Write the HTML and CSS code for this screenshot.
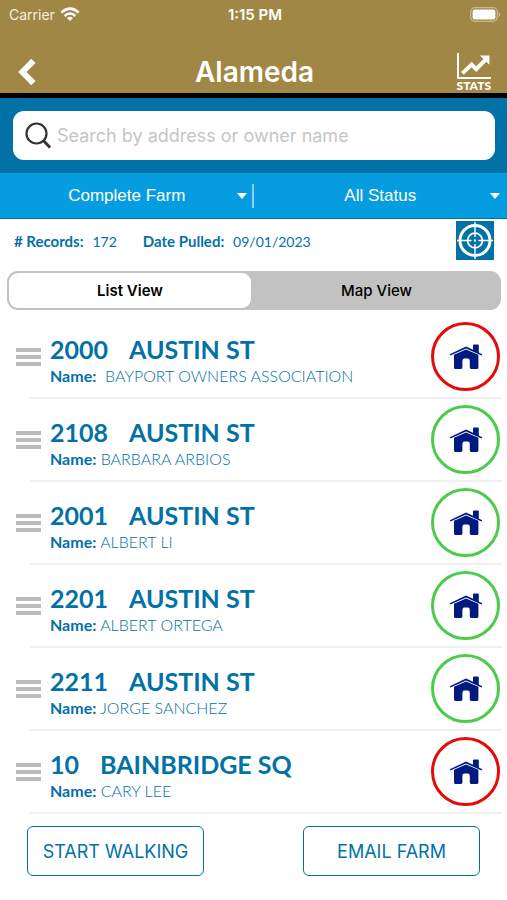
FILE: index.html
```html
<!DOCTYPE html>
<html lang="en">
<head>
  <meta charset="UTF-8" />
  <meta name="viewport" content="width=device-width, initial-scale=1.0" />
  <title>Alameda</title>
  <link rel="stylesheet" href="styles.css">
</head>
<body>

  <!-- Shared icons -->
  <svg class="icon-defs" aria-hidden="true">
    <symbol id="house" viewBox="0 0 34 26">
      <path d="M17 2.6 L0.8 10.2 L1.4 11.4 L17 4.6 L32.6 11.4 L33.2 10.2 L29.8 8.6 V1.4 Q29.8 0.4 28.8 0.4 H25 Q24 0.4 24 1.4 V5.8 Z" />
      <path d="M17 5.4 L5 10.8 V23.4 Q5 25 6.6 25 H12 Q13.4 25 13.4 23.6 V17 Q13.4 14.6 15.4 14.6 H18.8 Q20.8 14.6 20.8 17 V23.6 Q20.8 25 22.2 25 H27.8 Q29.4 25 29.4 23.4 V10.8 Z" />
    </symbol>
  </svg>

  <header class="top-bar">
    <div class="status-bar">
      <span class="carrier">Carrier
        <svg width="20" height="15" viewBox="0 0 20 15" fill="none" stroke="#fff" stroke-width="2.6" aria-hidden="true">
          <path d="M1.3 5.6 Q10 -2.4 18.7 5.6" />
          <path d="M4.6 9 Q10 4 15.4 9" />
          <path d="M10 14 L7 10.9 Q10 8.4 13 10.9 Z" fill="#fff" stroke="none" />
        </svg>
      </span>
      <span class="time">1:15 PM</span>
      <svg class="battery" width="31" height="15" viewBox="0 0 31 15" aria-hidden="true">
        <rect x="0.7" y="0.7" width="26.6" height="13.6" rx="4" fill="none" stroke="#c9bb92" stroke-width="1.2" />
        <rect x="2.6" y="2.6" width="22.8" height="9.8" rx="2.2" fill="#fff" />
        <path d="M28.6 5 Q30.4 6 30.4 7.5 Q30.4 9 28.6 10 Z" fill="#c9bb92" />
      </svg>
    </div>
    <div class="title-bar">
      <button class="back-button" aria-label="Back">
        <svg width="18" height="28" viewBox="0 0 18 28" fill="none" stroke="#fff" stroke-width="6" aria-hidden="true">
          <path d="M15.4 2.8 L4.4 14 L15.4 25.2" />
        </svg>
      </button>
      <h1>Alameda</h1>
      <button class="stats-button">
        <svg width="34" height="26" viewBox="0 0 34 26" aria-hidden="true">
          <path d="M1 0 V25 H34" fill="none" stroke="#fff" stroke-width="2" />
          <path d="M5.4 20.4 L14.6 11.6 L19.2 16.2 L28.4 6.8" fill="none" stroke="#fff" stroke-width="4" />
          <path d="M23 2.4 H32.4 V11.8 Z" fill="#fff" />
        </svg>
        <span>STATS</span>
      </button>
    </div>
  </header>

  <form class="search-bar">
    <label class="search-box">
      <svg width="26" height="27" viewBox="0 0 26 27" fill="none" stroke="#333" aria-hidden="true">
        <circle cx="11.5" cy="11.5" r="10" stroke-width="2.2" />
        <path d="M18.6 18.8 L25 25.6" stroke-width="2.8" />
      </svg>
      <input type="search" placeholder="Search by address or owner name" aria-label="Search by address or owner name">
    </label>
  </form>

  <div class="filter-bar">
    <div class="filter">
      <select aria-label="Farm">
        <option>Complete Farm</option>
      </select>
    </div>
    <div class="filter">
      <select aria-label="Status">
        <option>All Status</option>
      </select>
    </div>
  </div>

  <main>
    <div class="summary">
      <p><b># Records:</b> <span>172</span></p>
      <p><b>Date Pulled:</b> <span>09/01/2023</span></p>
      <button class="target-button" aria-label="Locate">
        <svg width="38" height="39" viewBox="0 0 38 39" fill="none" stroke="#fff" aria-hidden="true">
          <circle cx="19" cy="19.5" r="15" stroke-width="3" />
          <circle cx="19" cy="19.5" r="7.4" stroke-width="1.8" />
          <path d="M19 1 V16 M19 23 V38 M1 19.5 H15.5 M22.5 19.5 H37" stroke-width="1.4" />
          <circle cx="19" cy="19.5" r="1.2" fill="#fff" stroke="none" />
        </svg>
      </button>
    </div>

    <div class="view-switch">
      <button class="active" aria-pressed="true">List View</button>
      <button aria-pressed="false">Map View</button>
    </div>

    <ul class="records">
      <li class="record">
        <button class="handle" aria-label="Reorder"><i></i><i></i><i></i></button>
        <div class="details">
          <h2><span>2000</span><span>AUSTIN ST</span></h2>
          <p><b>Name:</b>&nbsp; BAYPORT OWNERS ASSOCIATION</p>
        </div>
        <button class="home-button red" aria-label="Open property"><svg width="34" height="26"><use href="#house" /></svg></button>
      </li>
      <li class="record">
        <button class="handle" aria-label="Reorder"><i></i><i></i><i></i></button>
        <div class="details">
          <h2><span>2108</span><span>AUSTIN ST</span></h2>
          <p><b>Name:</b> BARBARA ARBIOS</p>
        </div>
        <button class="home-button green" aria-label="Open property"><svg width="34" height="26"><use href="#house" /></svg></button>
      </li>
      <li class="record">
        <button class="handle" aria-label="Reorder"><i></i><i></i><i></i></button>
        <div class="details">
          <h2><span>2001</span><span>AUSTIN ST</span></h2>
          <p><b>Name:</b> ALBERT LI</p>
        </div>
        <button class="home-button green" aria-label="Open property"><svg width="34" height="26"><use href="#house" /></svg></button>
      </li>
      <li class="record">
        <button class="handle" aria-label="Reorder"><i></i><i></i><i></i></button>
        <div class="details">
          <h2><span>2201</span><span>AUSTIN ST</span></h2>
          <p><b>Name:</b> ALBERT ORTEGA</p>
        </div>
        <button class="home-button green" aria-label="Open property"><svg width="34" height="26"><use href="#house" /></svg></button>
      </li>
      <li class="record">
        <button class="handle" aria-label="Reorder"><i></i><i></i><i></i></button>
        <div class="details">
          <h2><span>2211</span><span>AUSTIN ST</span></h2>
          <p><b>Name:</b> JORGE SANCHEZ</p>
        </div>
        <button class="home-button green" aria-label="Open property"><svg width="34" height="26"><use href="#house" /></svg></button>
      </li>
      <li class="record">
        <button class="handle" aria-label="Reorder"><i></i><i></i><i></i></button>
        <div class="details">
          <h2><span>10</span><span>BAINBRIDGE SQ</span></h2>
          <p><b>Name:</b> CARY LEE</p>
        </div>
        <button class="home-button red" aria-label="Open property"><svg width="34" height="26"><use href="#house" /></svg></button>
      </li>
    </ul>
  </main>

  <footer class="actions">
    <button>START WALKING</button>
    <button>EMAIL FARM</button>
  </footer>

</body>
</html>
```
FILE: styles.css
```css
/* Reset */
* {
  box-sizing: border-box;
  margin: 0;
  padding: 0;
}

body {
  font-family: Inter, "Liberation Sans", sans-serif;
  color: #0271a6;
  background: #fff;
  min-height: 100vh;
}

button {
  font-family: inherit;
  color: inherit;
  background: none;
  border: none;
  cursor: pointer;
}

svg {
  display: block;
}

.icon-defs {
  position: absolute;
  width: 0;
  height: 0;
}

/* Top bar */
.top-bar {
  background: #a08745;
  border-bottom: 5px solid #000;
  color: #fff;
}

.status-bar {
  display: grid;
  grid-template-columns: 1fr auto 1fr;
  align-items: center;
  height: 28px;
  padding: 0 6px 0 9px;
  font-size: 15px;
}

.carrier {
  display: flex;
  align-items: center;
  gap: 5px;
  font-size: 14px;
  color: #f4efe0;
}

.time {
  font-weight: 600;
}

.battery {
  justify-self: end;
}

.title-bar {
  display: grid;
  grid-template-columns: 1fr auto 1fr;
  align-items: end;
  height: 65px;
  padding: 0 16px 2px 18px;
}

.title-bar h1 {
  font-size: 28px;
  line-height: 38px;
  font-weight: 600;
}

.back-button {
  justify-self: start;
  padding-bottom: 5px;
}

.stats-button {
  justify-self: end;
  display: flex;
  flex-direction: column;
  align-items: center;
  gap: 2px;
  font-family: Lato, sans-serif;
  font-size: 12px;
  line-height: 10px;
  font-weight: 900;
}

/* Search */
.search-bar {
  background: #0271a6;
  padding: 13px 12px 12px 13px;
}

.search-box {
  display: flex;
  align-items: center;
  gap: 6px;
  height: 49px;
  padding: 0 12px;
  background: #fff;
  border-radius: 11px;
}

.search-box input {
  flex: 1;
  min-width: 0;
  font-family: inherit;
  font-size: 18px;
  color: #333;
  background: none;
  border: none;
  outline: none;
}

.search-box input::placeholder {
  color: #c5c5c7;
}

/* Filters */
.filter-bar {
  display: grid;
  grid-template-columns: 1fr 1fr;
  height: 47px;
  background: #069de0;
  border-top: 1px solid #0271a6;
  border-bottom: 1px solid #0271a6;
}

.filter {
  display: flex;
  align-items: center;
  position: relative;
}

.filter:first-child::before {
  content: "";
  position: absolute;
  right: 0;
  width: 2px;
  height: 24px;
  background: #8fd0f0;
}

/* Drop-down arrow */
.filter::after {
  content: "";
  position: absolute;
  right: 7px;
  border: 5px solid transparent;
  border-top: 6px solid #fff;
  border-bottom: 0;
  pointer-events: none;
}

.filter select {
  appearance: none;
  width: 100%;
  height: 100%;
  font-family: "Liberation Sans", Arial, sans-serif;
  font-size: 17px;
  text-align: center;
  text-align-last: center;
  color: #fff;
  background: none;
  border: none;
}

/* Summary */
.summary {
  display: flex;
  align-items: center;
  gap: 26px;
  height: 43px;
  padding: 0 13px 0 14px;
  font-family: Lato, sans-serif;
  font-size: 15px;
}

.summary span {
  margin-left: 5px;
  font-size: 14px;
}

.target-button {
  margin-left: auto;
  background: #0271a6;
}

/* List / map switch */
.view-switch {
  display: grid;
  grid-template-columns: 1fr 1fr;
  height: 39px;
  margin: 9px 6px 6px 7px;
  padding: 2px;
  background: #c2c2c2;
  border-radius: 11px;
}

.view-switch button {
  font-size: 15px;
  font-weight: 500;
  color: #000;
  border-radius: 9px;
}

.view-switch .active {
  margin-right: 3px;
  font-weight: 600;
  background: #fff;
}

/* Records */
.records {
  list-style: none;
}

.record {
  display: flex;
  align-items: center;
  height: 83px;
  padding: 0 7px 2px 16px;
  background: linear-gradient(#f0f0f0, #f0f0f0) 30px 100% / calc(100% - 35px) 2px no-repeat;
}

.handle {
  display: flex;
  flex-direction: column;
  gap: 3px;
  width: 25px;
}

.handle i {
  height: 4px;
  background: #bcbcbc;
}

.details {
  flex: 1;
  margin-left: 9px;
  padding-top: 8px;
  font-family: Lato, sans-serif;
}

.details h2 {
  display: flex;
  gap: 21px;
  font-size: 25px;
  line-height: 30px;
  font-weight: 700;
}

.details p {
  font-size: 16px;
  line-height: 24px;
  font-weight: 300;
}

.details b {
  font-weight: 700;
}

.home-button {
  display: flex;
  align-items: center;
  justify-content: center;
  width: 69px;
  height: 69px;
  border: 3px solid;
  border-radius: 50%;
}

.home-button svg {
  fill: #001a80;
}

.red {
  border-color: #e60a0a;
}

.green {
  border-color: #4ccb4c;
}

/* Bottom actions */
.actions {
  display: flex;
  justify-content: space-between;
  padding: 12px 27px 24px;
}

.actions button {
  width: 177px;
  height: 50px;
  font-size: 18px;
  border: 1px solid #0271a6;
  border-radius: 6px;
}
```
